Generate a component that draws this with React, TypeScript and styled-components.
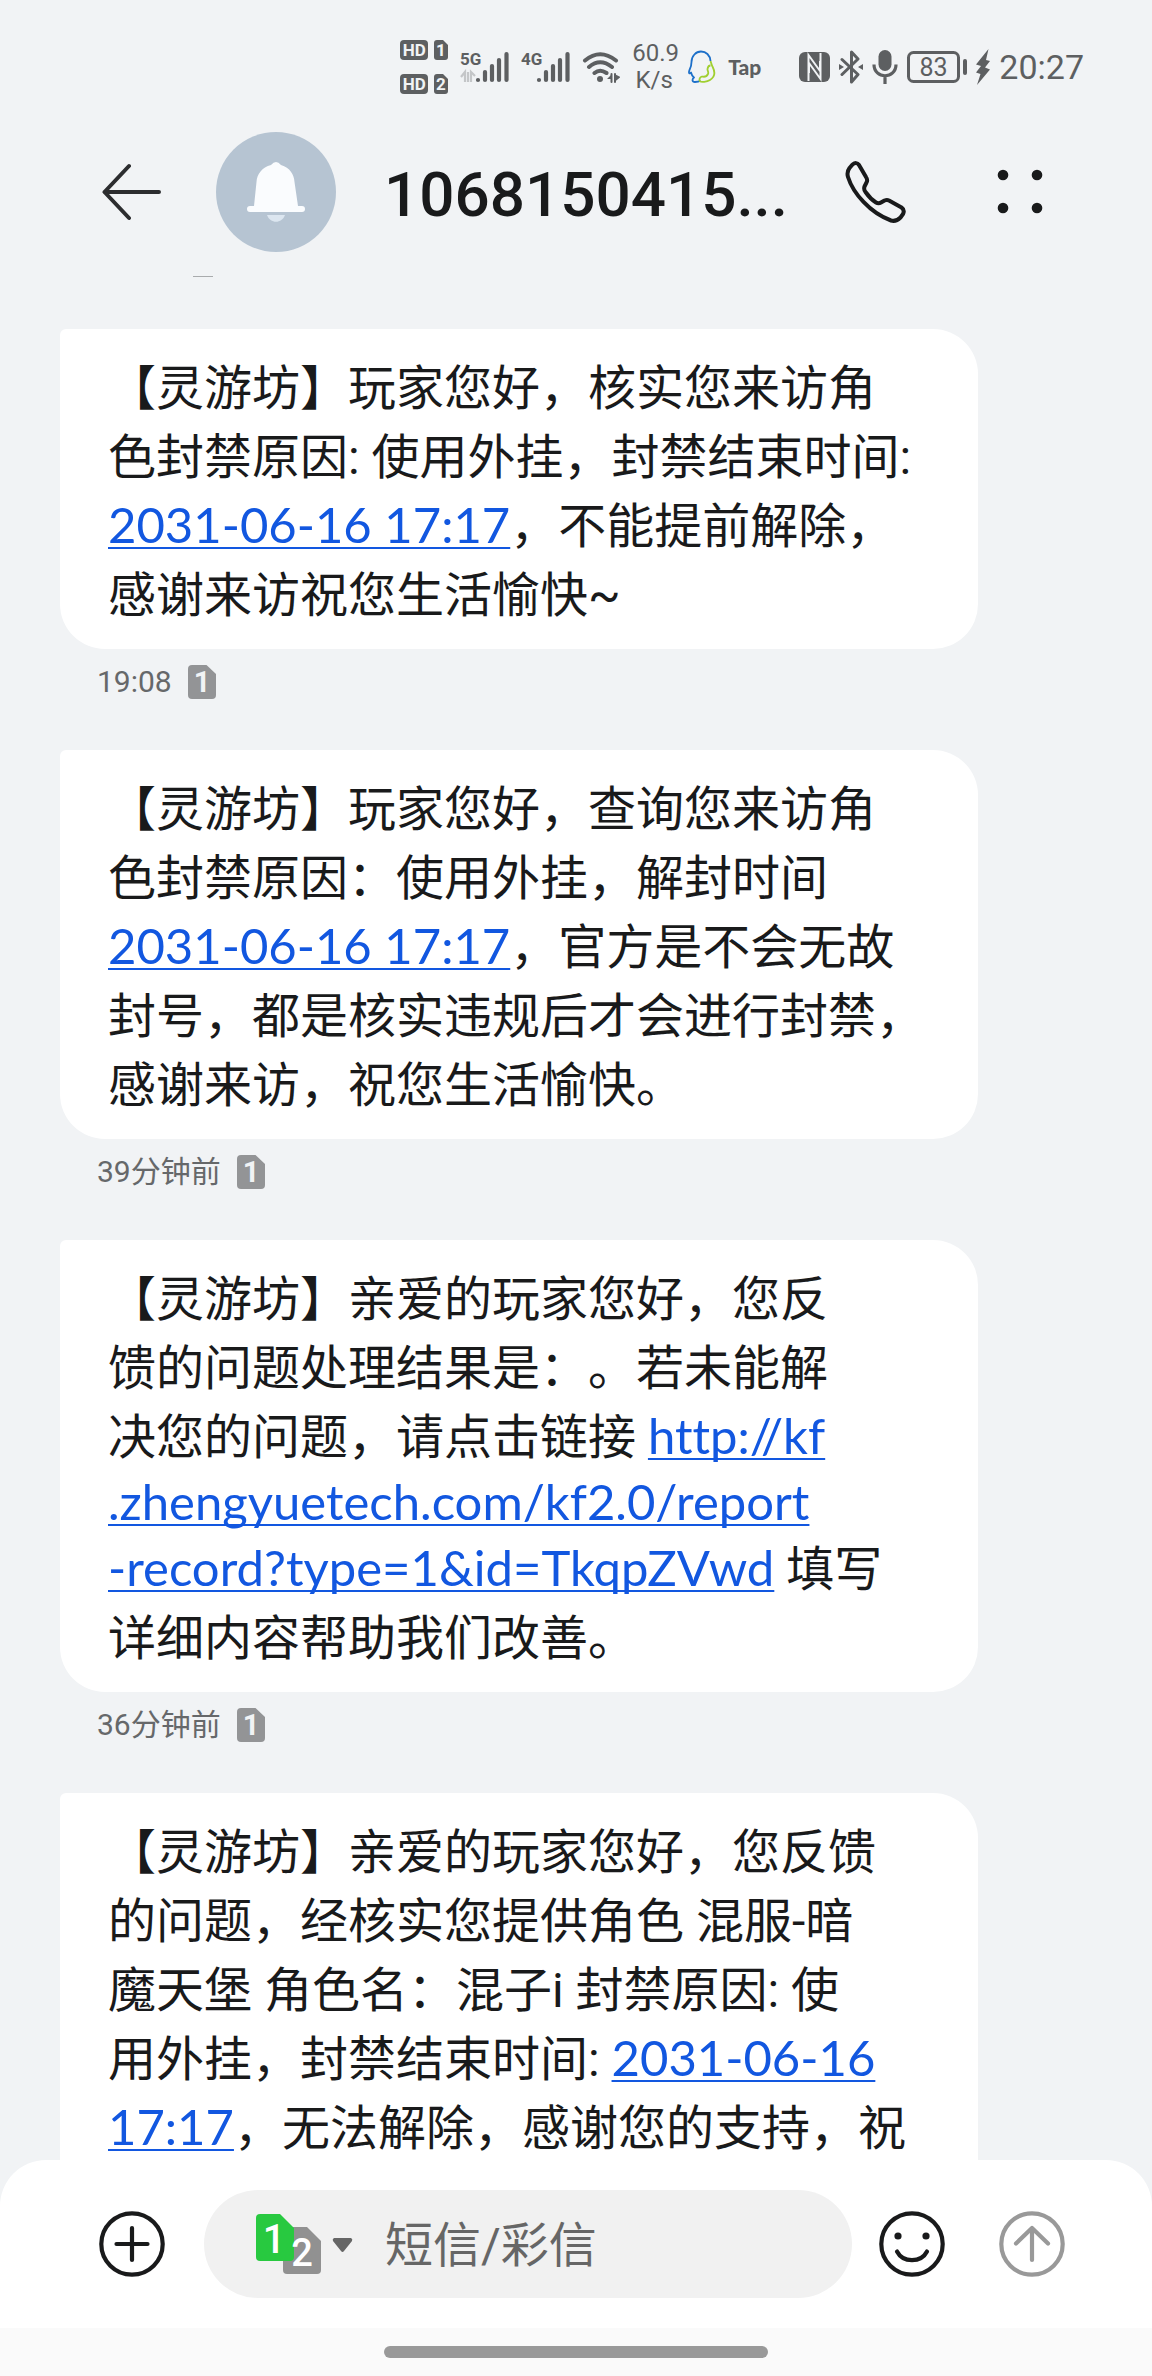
import React from 'react';
import styled, { createGlobalStyle } from 'styled-components';

const GlobalStyle = createGlobalStyle`
  * { box-sizing: border-box; }
  body {
    margin: 0;
    background: #f1f3f5;
    font-family: Roboto, "Noto Sans CJK SC", sans-serif;
    color: #191a1b;
  }
  button { border: 0; padding: 0; background: none; color: inherit; font: inherit; cursor: pointer; }
  svg { display: block; }
`;

const Screen = styled.div`
  display: flex;
  flex-direction: column;
  height: 100vh;
  overflow: hidden;
`;

const StatusBar = styled.div`
  display: flex;
  align-items: center;
  justify-content: flex-end;
  flex: none;
  gap: 38px;
  height: 132px;
  padding: 2px 68px 0 0;
  color: #5d5f61;
`;

const StatusGroup = styled.div<{ $gap: number }>`
  display: flex;
  align-items: center;
  gap: ${(p) => p.$gap}px;
`;

const HdGrid = styled.div`
  display: grid;
  grid-template-columns: 28px 14px;
  gap: 14px 6px;
`;

const HdTag = styled.span`
  display: flex;
  align-items: center;
  justify-content: center;
  height: 20px;
  border-radius: 4px;
  background: #5d5f61;
  color: #f1f3f5;
  font-size: 17px;
  font-weight: 700;
`;

const Speed = styled.span`
  width: 44px;
  text-align: center;
  font-size: 24px;
  line-height: 27px;
  white-space: nowrap;
`;

const TapMark = styled.span`
  font-family: Lato, sans-serif;
  font-size: 21px;
  line-height: 28px;
  font-weight: 900;
`;

const Clock = styled.span`
  font-size: 34px;
  line-height: 40px;
`;

const Header = styled.header`
  display: flex;
  align-items: center;
  flex: none;
  height: 120px;
  padding: 0 108px 0 102px;
`;

const Avatar = styled.div`
  flex: none;
  width: 120px;
  height: 120px;
  margin: 0 48px 0 54px;
  border-radius: 50%;
  background: #b6c4d2;
`;

const Title = styled.h1`
  flex: 1;
  min-width: 0;
  margin: 0;
  padding-top: 6px;
  overflow: hidden;
  white-space: nowrap;
  font-size: 62px;
  line-height: 72px;
  font-weight: 500;
`;

const HeaderActions = styled.div`
  display: flex;
  align-items: center;
  gap: 90px;
`;

const Thread = styled.main`
  flex: 1;
  min-height: 0;
  overflow: hidden;
  padding: 24px 60px 0;
`;

const Remnant = styled.div`
  width: 20px;
  height: 1px;
  margin: 0 0 52px 133px;
  background: #a9abad;
`;

const Message = styled.article`
  width: 89%;
`;

const Bubble = styled.p<{ $clipped?: boolean }>`
  margin: 0;
  padding: 25px 40px ${(p) => (p.$clipped ? 60 : 19)}px 48px;
  border-radius: 6px 45px 45px 45px;
  background: #fff;
  font-size: 48px;
  text-spacing-trim: space-all;
`;

const Line = styled.span<{ $latin?: boolean }>`
  display: block;
  line-height: ${(p) => (p.$latin ? 63 : 69)}px;
`;

const TextLink = styled.a`
  color: #1257e0;
  font-family: Lato, sans-serif;
  font-size: 49px;
  font-variant-ligatures: none;
  line-height: 1;
  text-decoration: underline;
  text-decoration-thickness: 2px;
  text-underline-offset: 4px;
  text-decoration-skip-ink: none;
`;

const Meta = styled.footer`
  display: flex;
  align-items: center;
  gap: 16px;
  height: 101px;
  padding: 0 0 36px 37px;
  color: #66686a;
  font-size: 30px;
  line-height: 36px;
`;

const Composer = styled.form`
  display: flex;
  align-items: center;
  flex: none;
  height: 168px;
  padding: 0 87px 0 99px;
  border-radius: 46px 46px 0 0;
  background: #fff;
`;

const Field = styled.div`
  display: flex;
  align-items: center;
  flex: 1;
  min-width: 0;
  height: 108px;
  margin: 0 27px 0 39px;
  padding: 0 48px 0 52px;
  border-radius: 54px;
  background: #f1f1f1;
`;

const SimSwitch = styled.button`
  display: flex;
  flex: none;
`;

const TextBox = styled.input`
  flex: 1;
  min-width: 0;
  margin-left: 31px;
  padding: 4px 0 0;
  border: 0;
  outline: 0;
  background: none;
  font: inherit;
  font-size: 48px;
  line-height: 70px;
  &::placeholder { color: #666; opacity: 1; }
`;

const SendButton = styled.button`
  margin-left: 54px;
  color: #999;
`;

const NavBar = styled.div`
  display: flex;
  justify-content: center;
  align-items: center;
  flex: none;
  height: 48px;
  background: #fafafa;
`;

const HomePill = styled.div`
  width: 33.4%;
  height: 12px;
  border-radius: 6px;
  background: #999;
`;

const SimCard = ({ n }: { n: number }) => (
  <svg width="28" height="34" viewBox="0 0 28 34">
    <path d="M4 0H18.500L28 9V30a4 4 0 0 1-4 4H4a4 4 0 0 1-4-4V4a4 4 0 0 1 4-4z" fill="#939496" />
    <text x="14" y="27" textAnchor="middle" fontSize="29" fontWeight="700" fontFamily="Roboto" fill="#f1f3f5">{n}</text>
  </svg>
);

const SimTag = ({ n }: { n: number }) => (
  <svg width="14" height="20" viewBox="0 0 14 20">
    <path d="M3 0H9L14 5V17a3 3 0 0 1-3 3H3a3 3 0 0 1-3-3V3a3 3 0 0 1 3-3z" fill="#5d5f61" />
    <text x="7" y="16" textAnchor="middle" fontSize="17" fontWeight="700" fontFamily="Roboto" fill="#f1f3f5">{n}</text>
  </svg>
);

const Signal = ({ label, arrows }: { label: string; arrows?: boolean }) => (
  <svg width="49" height="34" viewBox="0 0 49 34">
    <text x="0" y="15" fontSize="17" fontWeight="700" fontFamily="Roboto" fill="#5d5f61">{label}</text>
    {arrows && (
      <path d="M1 27l4-5v10M8 22v10M11 32V22l4 4" fill="none" stroke="#c4c6c8" strokeWidth="2.200" />
    )}
    <g stroke="#5d5f61" strokeWidth="4.200" strokeLinecap="round">
      <path d="M18 30v0M25 22v8M32 16v14M39 10v20M46.500 4v26" />
    </g>
  </svg>
);

const Wifi = () => (
  <svg width="38" height="34" viewBox="0 0 38 34" fill="none" stroke="#5d5f61" strokeWidth="4" strokeLinecap="round">
    <path d="M3 10.500Q18 -2 34 10.500M7 17Q18 7.500 30 17M12.500 23Q18 18.500 24.500 23" />
    <circle cx="18" cy="29" r="3" fill="#5d5f61" stroke="none" />
    <path d="M29.500 24v8M33 24v8" strokeWidth="2" />
    <path d="M30 24l-5 5h5zM32.500 24l6 3-6 5z" fill="#5d5f61" stroke="none" />
  </svg>
);

const Penguin = () => (
  <svg width="28" height="34" viewBox="0 0 28 34" fill="none" strokeWidth="1.800" strokeLinejoin="round">
    <path d="M22.500 11C22 5 18 1.500 13 1.500S3.500 6 3.500 12c0 3-.5 5-2 8-1.200 3 0 4.500 1.500 2.500.5 2 1.500 4 3 5-2 1.500-2.200 4.500 1 4.500 2 0 4-.3 5.500-1.200" stroke="#1c6fc9" />
    <path d="M22.500 11c1 3 1 4 2.200 6 3 6 2.300 10-2.700 13-3 2-9 2.500-10.200 1-.8-2 .2-4 2.200-4.500 3 .8 5-.5 6-2.500 1-1.500-.7-3.500-.5-5 .3-2 1.500-3.500 3-3.500" stroke="#a0cf30" />
  </svg>
);

const Nfc = () => (
  <svg width="31" height="32" viewBox="0 0 31 32">
    <rect x="0" y="1" width="31" height="30" rx="6" fill="#5d5f61" />
    <path d="M9.500 30V4L21 20V10M21.500 2v26L10 12v10" fill="none" stroke="#f1f3f5" strokeWidth="2" />
  </svg>
);

const Bluetooth = () => (
  <svg width="24" height="34" viewBox="0 0 24 34" fill="none" stroke="#5d5f61" strokeWidth="3" strokeLinejoin="round" strokeLinecap="round">
    <path d="M3 9.500L19 24.500 12.500 32V2L19 9 3 24.500" />
    <path d="M0 14l5 3-5 3zM24 14l-5 3 5 3z" fill="#5d5f61" stroke="none" />
  </svg>
);

const Mic = () => (
  <svg width="26" height="34" viewBox="0 0 26 34" fill="none" stroke="#5d5f61" strokeWidth="3.200">
    <rect x="6.500" y="0" width="13" height="21" rx="6.500" fill="#5d5f61" stroke="none" />
    <path d="M2 14.500c0 15 22 15 22 0M13 25.500V34" />
  </svg>
);

const Battery = () => (
  <svg width="60" height="32" viewBox="0 0 60 32">
    <rect x="1.500" y="1.500" width="50" height="29" rx="5" fill="none" stroke="#5d5f61" strokeWidth="3" />
    <rect x="56" y="8" width="4" height="16" rx="2" fill="#5d5f61" />
    <text x="26.500" y="25" textAnchor="middle" fontSize="25" fontFamily="Roboto" fill="#5d5f61">83</text>
  </svg>
);

const Bolt = () => (
  <svg width="14" height="36" viewBox="0 0 14 36">
    <path d="M12.500 0L0 15.500l5 1.500-5 6.500 4.500 1.500L1 36l13-15.500-5-2 5-6.500-4-1z" fill="#5d5f61" />
  </svg>
);

const BackArrow = () => (
  <svg width="60" height="60" viewBox="0 0 60 60" fill="none" stroke="#2c2d2f" strokeWidth="4" strokeLinecap="round" strokeLinejoin="round">
    <path d="M27 4L2.500 30 27 56M2.500 30H57" />
  </svg>
);

const Bell = () => (
  <svg width="120" height="120" viewBox="0 0 120 120">
    <path d="M55 33q5-6 10 0c9 3 13 9 13.500 17L82 74h4a3 3 0 0 1 0 6H34a3 3 0 0 1 0-6h4l2.500-24C41 42 46 35.500 55 33z" fill="#fafcfe" />
    <path d="M51 83h18c-3 9-15 9-18 0z" fill="#dce6f0" />
  </svg>
);

const Phone = () => (
  <svg width="61" height="62" viewBox="0 0 61 62" fill="none" stroke="#191a1b" strokeWidth="4" strokeLinejoin="round">
    <path d="M4.500 7L7.500 3.500Q11.500 0.500 14 4L21 16Q23 19 21.500 21.500L19.500 25.500Q18.500 28.500 20.500 31C24 36 27 39 31 41.500Q33.500 43 36 41.500L39.500 39.500Q42 38.500 44 39.500L56.500 46.500Q60 49 58 53L55.500 56.500Q51 61 46 59.500C25 52 8 32 3 16Q1.500 11 4.500 7z" />
  </svg>
);

const More = () => (
  <svg width="48" height="48" viewBox="0 0 48 48" fill="#191a1b">
    <circle cx="7" cy="7" r="5.300" /><circle cx="41" cy="7" r="5.300" />
    <circle cx="7" cy="40" r="5.300" /><circle cx="41" cy="40" r="5.300" />
  </svg>
);

const Round = ({ children }: { children: React.ReactNode }) => (
  <svg width="66" height="66" viewBox="0 0 66 66" fill="none" stroke="currentColor" strokeWidth="4.200" strokeLinecap="round" strokeLinejoin="round">
    <circle cx="33" cy="33" r="30.700" />
    {children}
  </svg>
);

const DualSim = () => (
  <svg width="98" height="60" viewBox="0 0 98 60">
    <path d="M31 13H51L65 27V56a4 4 0 0 1-4 4H31a4 4 0 0 1-4-4V17a4 4 0 0 1 4-4z" fill="#919191" />
    <path d="M4 0H24L38 14V43a4 4 0 0 1-4 4H4a4 4 0 0 1-4-4V4a4 4 0 0 1 4-4z" fill="#28c940" />
    <g fontFamily="Roboto" fontWeight="500" fill="#fff" textAnchor="middle">
      <text x="18" y="39" fontSize="40">1</text>
      <text x="46" y="52" fontSize="38">2</text>
    </g>
    <path d="M78 24H95q2 1 1 3l-8 10q-1.500 2-3 0l-8-10q-1-2 1-3z" fill="#666" />
  </svg>
);

const Stamp = ({ time }: { time: string }) => (
  <Meta>
    <time>{time}</time>
    <SimCard n={1} />
  </Meta>
);

export default function App() {
  return (
    <>
      <GlobalStyle />
      <Screen>
        <StatusBar>
          <StatusGroup $gap={12}>
            <HdGrid>
              <HdTag>HD</HdTag><SimTag n={1} />
              <HdTag>HD</HdTag><SimTag n={2} />
            </HdGrid>
            <Signal label="5G" arrows />
            <Signal label="4G" />
            <Wifi />
            <Speed>60.9<br />K/s</Speed>
            <Penguin />
            <TapMark>Tap</TapMark>
          </StatusGroup>
          <StatusGroup $gap={9}>
            <Nfc />
            <Bluetooth />
            <Mic />
            <Battery />
            <Bolt />
            <Clock>20:27</Clock>
          </StatusGroup>
        </StatusBar>

        <Header>
          <button type="button" aria-label="返回"><BackArrow /></button>
          <Avatar><Bell /></Avatar>
          <Title>1068150415...</Title>
          <HeaderActions>
            <button type="button" aria-label="呼叫"><Phone /></button>
            <button type="button" aria-label="更多"><More /></button>
          </HeaderActions>
        </Header>

        <Thread>
          <Remnant />
          <Message>
            <Bubble>
              <Line>【灵游坊】玩家您好，核实您来访角</Line>
              <Line>色封禁原因: 使用外挂，封禁结束时间:</Line>
              <Line><TextLink href="#t1">2031-06-16 17:17</TextLink>，不能提前解除，</Line>
              <Line>感谢来访祝您生活愉快~</Line>
            </Bubble>
            <Stamp time="19:08" />
          </Message>
          <Message>
            <Bubble>
              <Line>【灵游坊】玩家您好，查询您来访角</Line>
              <Line>色封禁原因：使用外挂，解封时间</Line>
              <Line><TextLink href="#t2">2031-06-16 17:17</TextLink>，官方是不会无故</Line>
              <Line>封号，都是核实违规后才会进行封禁，</Line>
              <Line>感谢来访，祝您生活愉快。</Line>
            </Bubble>
            <Stamp time="39分钟前" />
          </Message>
          <Message>
            <Bubble>
              <Line>【灵游坊】亲爱的玩家您好，您反</Line>
              <Line>馈的问题处理结果是：。若未能解</Line>
              <Line>决您的问题，请点击链接 <TextLink href="#report">http://kf</TextLink></Line>
              <Line $latin><TextLink href="#report">.zhengyuetech.com/kf2.0/report</TextLink></Line>
              <Line><TextLink href="#report">-record?type=1&amp;id=TkqpZVwd</TextLink> 填写</Line>
              <Line>详细内容帮助我们改善。</Line>
            </Bubble>
            <Stamp time="36分钟前" />
          </Message>
          <Message>
            <Bubble $clipped>
              <Line>【灵游坊】亲爱的玩家您好，您反馈</Line>
              <Line>的问题，经核实您提供角色 混服-暗</Line>
              <Line>魔天堡 角色名：混子i 封禁原因: 使</Line>
              <Line>用外挂，封禁结束时间: <TextLink href="#t4">2031-06-16</TextLink></Line>
              <Line><TextLink href="#t4">17:17</TextLink>，无法解除，感谢您的支持，祝</Line>
            </Bubble>
          </Message>
        </Thread>

        <Composer onSubmit={(e) => e.preventDefault()}>
          <button type="button" aria-label="添加">
            <Round><path d="M33 17v32M17.500 33h31" /></Round>
          </button>
          <Field>
            <SimSwitch type="button" aria-label="切换 SIM 卡"><DualSim /></SimSwitch>
            <TextBox type="text" aria-label="短信/彩信" placeholder="短信/彩信" />
          </Field>
          <button type="button" aria-label="表情">
            <Round>
              <circle cx="19" cy="25" r="3.600" fill="currentColor" stroke="none" />
              <circle cx="47" cy="25" r="3.600" fill="currentColor" stroke="none" />
              <path d="M18 40.500C24 52 42 52 48 40.500" />
            </Round>
          </button>
          <SendButton type="submit" aria-label="发送">
            <Round><path d="M17 32.500L33 17l16 15.500M33 17v32" /></Round>
          </SendButton>
        </Composer>
        <NavBar><HomePill /></NavBar>
      </Screen>
    </>
  );
}
